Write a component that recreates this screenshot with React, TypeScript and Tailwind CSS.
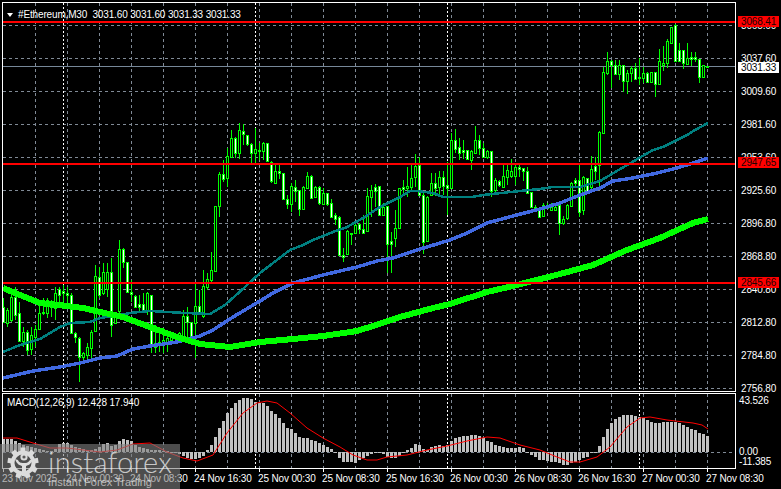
import React from "react";

// [high, bodyTop, bodyBottom, low, filled] in page pixels, one bar every 4px from x=3.5
const bars: number[][] = [
  [298,307,322,323,1],[308,310,323,327,0],[293,297,320,322,0],[287,297,315,320,1],[302,313,341,342,1],
  [327,332,341,347,0],[330,332,350,355,1],[327,335,349,355,0],[325,329,337,347,0],[302,313,329,330,0],
  [298,312,313,315,1],[298,300,313,318,0],[300,301,307,317,0],[287,293,308,320,0],[287,289,295,308,1],
  [285,291,293,308,1],[287,293,295,305,1],[293,295,333,333,1],[332,333,337,343,1],[337,338,357,382,1],
  [352,353,357,363,0],[343,347,355,360,0],[330,332,348,358,0],[265,276,331,332,0],[267,277,295,298,1],
  [263,272,293,295,0],[263,272,289,297,0],[258,272,325,337,1],[312,312,323,323,0],[240,249,311,313,0],
  [248,249,262,268,1],[262,262,292,293,1],[280,292,294,302,1],[295,296,307,308,1],[295,304,307,312,1],
  [293,304,310,312,1],[292,293,310,315,0],[295,295,345,353,1],[325,343,347,353,0],[327,342,345,352,0],
  [328,340,343,353,0],[330,338,342,352,0],[333,337,340,345,0],[333,335,338,343,0],[332,333,338,343,0],
  [310,316,337,340,0],[307,316,322,337,1],[322,322,337,340,1],[283,306,323,358,0],[290,306,313,315,1],
  [270,286,316,318,0],[273,279,287,290,0],[252,270,280,282,0],[206,206,271,272,0],[172,174,206,217,0],
  [160,174,179,182,1],[148,156,178,187,0],[130,138,157,158,0],[137,138,153,158,1],[123,130,153,159,0],
  [124,131,134,145,1],[135,135,144,146,1],[143,144,153,163,1],[128,149,153,165,0],[143,150,151,160,1],
  [142,143,151,160,0],[143,143,161,161,1],[161,162,181,183,1],[163,171,183,183,0],[165,171,173,179,1],
  [173,173,199,200,1],[195,199,204,209,1],[183,186,204,212,0],[180,187,191,202,1],[190,190,209,216,1],
  [186,187,209,209,0],[172,176,188,188,0],[175,176,198,198,1],[186,187,197,197,0],[186,187,203,205,1],
  [188,193,204,205,0],[193,193,204,206,1],[199,203,217,218,1],[213,215,219,225,1],[216,217,255,256,1],
  [248,255,257,262,1],[230,231,254,254,0],[233,233,234,245,1],[223,225,233,234,0],[223,224,229,234,1],
  [215,229,233,234,1],[188,196,231,232,0],[185,190,197,217,0],[184,187,191,207,1],[186,186,215,215,1],
  [203,207,215,215,0],[206,206,244,273,1],[232,241,244,273,1],[210,228,238,247,0],[188,188,228,228,0],
  [180,187,189,195,1],[167,186,188,197,0],[165,178,187,190,0],[154,166,177,187,0],[157,165,195,196,1],
  [193,195,242,254,1],[196,197,241,242,0],[173,183,195,196,0],[173,183,188,196,1],[171,177,187,196,0],
  [171,177,186,195,1],[162,185,188,215,1],[133,140,188,188,0],[129,140,149,153,1],[138,147,153,160,1],
  [140,150,152,159,1],[150,150,159,160,1],[150,151,160,170,0],[126,140,153,153,0],[135,140,148,155,1],
  [143,148,157,157,1],[150,151,157,159,0],[151,151,191,197,1],[178,180,190,192,0],[180,181,185,187,1],
  [165,176,187,187,0],[165,170,177,185,0],[159,171,176,178,0],[165,167,176,185,0],[165,167,169,177,1],
  [168,168,171,181,1],[167,171,193,193,1],[192,192,207,207,1],[205,207,208,210,1],[208,210,217,218,1],
  [203,205,216,217,0],[203,205,208,209,0],[203,207,210,211,0],[205,207,210,211,0],[205,205,223,235,1],
  [216,219,223,225,0],[204,205,218,220,0],[182,183,206,207,0],[178,180,183,187,1],[165,180,212,217,1],
  [176,177,210,215,0],[178,178,192,193,1],[156,169,187,193,0],[157,166,171,180,1],[131,132,165,190,0],
  [67,72,133,133,0],[52,61,73,75,0],[60,61,65,88,1],[60,65,74,75,1],[60,65,74,80,0],
  [65,65,81,92,1],[70,73,81,94,0],[66,68,73,82,0],[63,68,79,80,1],[58,77,78,85,0],
  [67,73,78,83,0],[72,73,82,83,1],[72,72,82,83,0],[72,72,84,97,1],[49,61,84,85,0],
  [46,63,65,71,0],[39,41,63,68,0],[27,27,43,43,0],[24,25,61,61,1],[43,50,61,62,1],
  [50,50,63,69,1],[43,58,64,65,0],[52,57,59,66,1],[52,57,59,62,1],[59,59,77,83,1],
  [65,65,77,77,0],[66,66,66,66,0],
];

// histogram end of each MACD bar, zero line is y=452
const hist = [
  439,439,439,441,443,445,446,447,448,449,450,451,451,449,444,443,443,445,447,448,
  449,450,450,449,447,444,443,446,445,441,439,440,441,445,447,448,449,450,450,450,
  451,451,452,452,454,456,458,459,459,458,456,450,445,437,428,421,413,408,403,400,
  398,398,399,402,403,403,406,411,414,418,423,428,429,433,437,438,438,440,441,443,
  445,447,449,452,458,462,462,462,463,460,458,456,454,453,453,454,457,458,458,456,
  453,450,448,444,445,449,450,447,446,445,446,445,441,438,437,436,436,435,435,436,
  438,441,442,445,446,447,448,448,448,447,448,453,455,457,460,460,461,462,462,463,
  465,465,463,462,460,458,457,453,452,446,437,429,423,419,417,415,415,415,416,417,
  418,420,422,423,423,422,422,422,422,423,425,427,429,430,433,434,436,
];

const teal = "3,352 20,345 40,339 60,327 70,323 90,322 100,318 120,315 130,313 150,311 185,313 210,314 225,305 245,287 260,273 277,260 290,250 303,245 313,240 333,232 347,227 363,218 380,207 400,197 410,191 417,191 433,193 443,197 472,197 483,195 520,191 540,189 553,187 580,187 600,181 627,165 653,150 663,147 677,140 687,135 695,130 708,123";
const blue = "3,378 33,371 60,367 80,363 100,358 117,356 133,349 150,346 177,342 200,336 213,330 233,317 260,301 273,293 293,283 323,275 357,267 377,261 393,258 417,250 450,240 467,233 487,223 513,216 540,209 560,203 580,195 600,188 613,181 633,178 657,173 677,168 693,163 708,158";
const lime = "3,288 20,295 40,303 67,306 83,308 100,312 123,317 150,327 177,337 200,344 230,347 260,342 293,339 323,336 357,331 373,326 400,317 433,308 450,304 487,292 517,285 560,274 593,265 627,250 660,238 693,223 708,219";
const signal = "3,438 17,438 33,443 50,448 67,448 100,452 117,450 133,444 150,443 167,452 183,458 197,461 213,455 227,433 243,413 257,403 267,401 277,403 290,413 307,428 323,438 340,447 353,455 367,460 377,460 387,457 407,455 427,450 447,446 467,441 487,437 500,438 520,445 540,450 557,457 570,462 580,462 597,457 610,447 627,427 640,418 650,417 667,420 693,423 702,425 708,429";

const gridY = [25.5,58.5,91.5,124.5,157.5,190.5,223.5,256.5,289.5,322.5,355.5,388.5];
const gridX = Array.from({ length: 22 }, (_, i) => 35.5 + i * 32);
const separators = [63.5, 255.5, 447.5, 639.5];
const priceLabels = ["3065.60","3037.60","3009.60","2981.60","2953.60","2925.60","2896.80","2868.80","2840.80","2812.80","2784.80","2756.80"];
const timeLabels = ["23 Nov 2025","24 Nov 00:30","24 Nov 08:30","24 Nov 16:30","25 Nov 00:30","25 Nov 08:30","25 Nov 16:30","26 Nov 00:30","26 Nov 08:30","26 Nov 16:30","27 Nov 00:30","27 Nov 08:30"];

function VerticalGrid({ y1, y2 }: { y1: number; y2: number }) {
  return (
    <>
      {gridX.map((x) => (
        <line key={x} x1={x} x2={x} y1={y1} y2={y2} stroke="#808a96" strokeDasharray="3 3" />
      ))}
      {separators.map((x) => (
        <line key={x} x1={x} x2={x} y1={y1} y2={y2} stroke="#ffffff" strokeDasharray="2 2" />
      ))}
    </>
  );
}

function Candles() {
  return (
    <>
      {bars.map(([high, top, bottom, low, filled], i) => {
        const x = 3.5 + i * 4;
        return (
          <g key={i} stroke="#00ff00">
            <line x1={x} x2={x} y1={high} y2={low} />
            <rect x={x - 1} y={top + 0.5} width={2} height={Math.max(bottom - top, 1)} fill={filled ? "#ffffff" : "#000000"} />
          </g>
        );
      })}
    </>
  );
}

function MainChart() {
  return (
    <svg viewBox="3 3 732 388" className="block w-[732px] h-[388px]" shapeRendering="crispEdges">
      {gridY.map((y) => (
        <line key={y} x1={3} x2={735} y1={y} y2={y} stroke="#808a96" strokeDasharray="3 3" />
      ))}
      <VerticalGrid y1={3} y2={391} />
      <line x1={3} x2={735} y1={66.5} y2={66.5} stroke="#778899" />
      <Candles />
      <polyline points={teal} fill="none" stroke="#008080" strokeWidth={2.5} />
      <polyline points={blue} fill="none" stroke="#4169e1" strokeWidth={3.5} />
      <polyline points={lime} fill="none" stroke="#00ff00" strokeWidth={6} />
      <line x1={3} x2={735} y1={22} y2={22} stroke="#ff0000" strokeWidth={2} />
      <line x1={3} x2={735} y1={164} y2={164} stroke="#ff0000" strokeWidth={2} />
      <line x1={3} x2={735} y1={283} y2={283} stroke="#ff0000" strokeWidth={2} />
    </svg>
  );
}

function MacdChart() {
  return (
    <svg viewBox="3 394 732 74" className="block w-[732px] h-[74px]">
      <g shapeRendering="crispEdges">
        <VerticalGrid y1={394} y2={468} />
        <line x1={3} x2={735} y1={452.5} y2={452.5} stroke="#808a96" strokeDasharray="3 3" />
        {hist.map((y, i) => (
          <rect key={i} x={2 + i * 4} y={Math.min(y, 452)} width={3} height={Math.max(Math.abs(y - 452), 1)} fill="#c0c0c0" />
        ))}
      </g>
      <polyline points={signal} fill="none" stroke="#ff0000" strokeWidth={1} />
    </svg>
  );
}

// instaforex gear mark
function GearLogo() {
  const teeth = Array.from({ length: 9 }, (_, i) => (i * 360) / 9);
  return (
    <svg viewBox="0 0 32 32" className="w-[32px] h-[32px] shrink-0">
      <g fill="#dcdcdc">
        {teeth.map((a) => (
          <rect key={a} x={13.5} y={0.5} width={5} height={6} transform={`rotate(${a} 16 16)`} />
        ))}
      </g>
      <circle cx={16} cy={16} r={10.5} fill="none" stroke="#dcdcdc" strokeWidth={4} />
      <circle cx={17} cy={10} r={2.6} fill="#5a5a5a" stroke="#dcdcdc" strokeWidth={2} />
      <path d="M8 12 C10 18 13 18 15 19 L15 29 L19 29 L19 19 C21 18 24 18 26 12 L23 13 C21 16 19 16 17 16 C15 16 12 16 11 13 Z" fill="#dcdcdc" />
    </svg>
  );
}

function PriceTag({ top, text, className }: { top: number; text: string; className: string }) {
  return (
    <div className={`absolute left-[2px] flex h-[11px] w-[41px] items-center pl-[3px] ${className}`} style={{ top }}>
      {text}
    </div>
  );
}

export default function App() {
  return (
    <div className="relative w-[781px] h-[489px] overflow-hidden bg-black pt-[2px] pl-[2px] text-[10px] tracking-[-0.15px] leading-none text-white font-['Liberation_Sans',sans-serif]">
      {/* main pane + price scale */}
      <div className="flex h-[391px]">
        <div className="relative w-[734px] h-[390px] border border-white">
          <MainChart />
          <div className="absolute left-[4px] top-[7px] flex items-center gap-[5px]">
            <span className="w-0 h-0 border-x-[3.5px] border-x-transparent border-t-[4px] border-t-white" />
            <span className="whitespace-pre">#Ethereum,M30  3031.60 3031.60 3031.33 3031.33</span>
          </div>
        </div>
        <div className="relative flex-1 pt-[7px]">
          {priceLabels.map((p) => (
            <div key={p} className="flex h-[33px] items-center pl-[5px]">{p}</div>
          ))}
          <PriceTag top={14} className="bg-[#ff0000] text-[#200000]" text="3068.41" />
          <PriceTag top={60} className="bg-white text-black" text="3031.33" />
          <PriceTag top={155} className="bg-[#ff0000] text-[#200000]" text="2947.65" />
          <PriceTag top={275} className="bg-[#ff0000] text-[#200000]" text="2845.66" />
        </div>
      </div>

      {/* macd pane + its scale */}
      <div className="flex h-[76px]">
        <div className="relative w-[734px] h-[76px] border border-white">
          <MacdChart />
          <span className="absolute left-[4px] top-[4px] whitespace-pre">MACD(12,26,9) 12.428 17.940</span>
        </div>
        <div className="flex flex-1 flex-col pl-[3px] pt-[3px]">
          <span className="flex h-[10px] items-center">43.526</span>
          <span className="mt-[41px] flex h-[10px] items-center">0.00</span>
          <span className="flex h-[10px] items-center">-11.385</span>
        </div>
      </div>

      {/* time axis */}
      <div className="flex pl-[1px]">
        {timeLabels.map((t) => (
          <div key={t} className="w-[64px] shrink-0 whitespace-nowrap">
            <div className="w-px h-[3px] bg-white" />
            <div className="mt-[2px] -ml-px">{t}</div>
          </div>
        ))}
      </div>

      {/* watermark */}
      <div className="absolute left-0 bottom-0 w-[180px] h-[45px] bg-[#808080]/60 text-white/70 tracking-normal">
        <div className="flex items-start gap-[9px] pl-[7px] pt-[3px]">
          <GearLogo />
          <div className="flex flex-col font-['Lato',sans-serif]">
            <span className="text-[29px] font-light leading-[29px] tracking-[0.2px]">instaforex</span>
            <span className="text-[11px] leading-[11px] mt-[1px] text-white/60 font-['Liberation_Sans',sans-serif]">Instant Forex Trading</span>
          </div>
        </div>
      </div>
    </div>
  );
}
